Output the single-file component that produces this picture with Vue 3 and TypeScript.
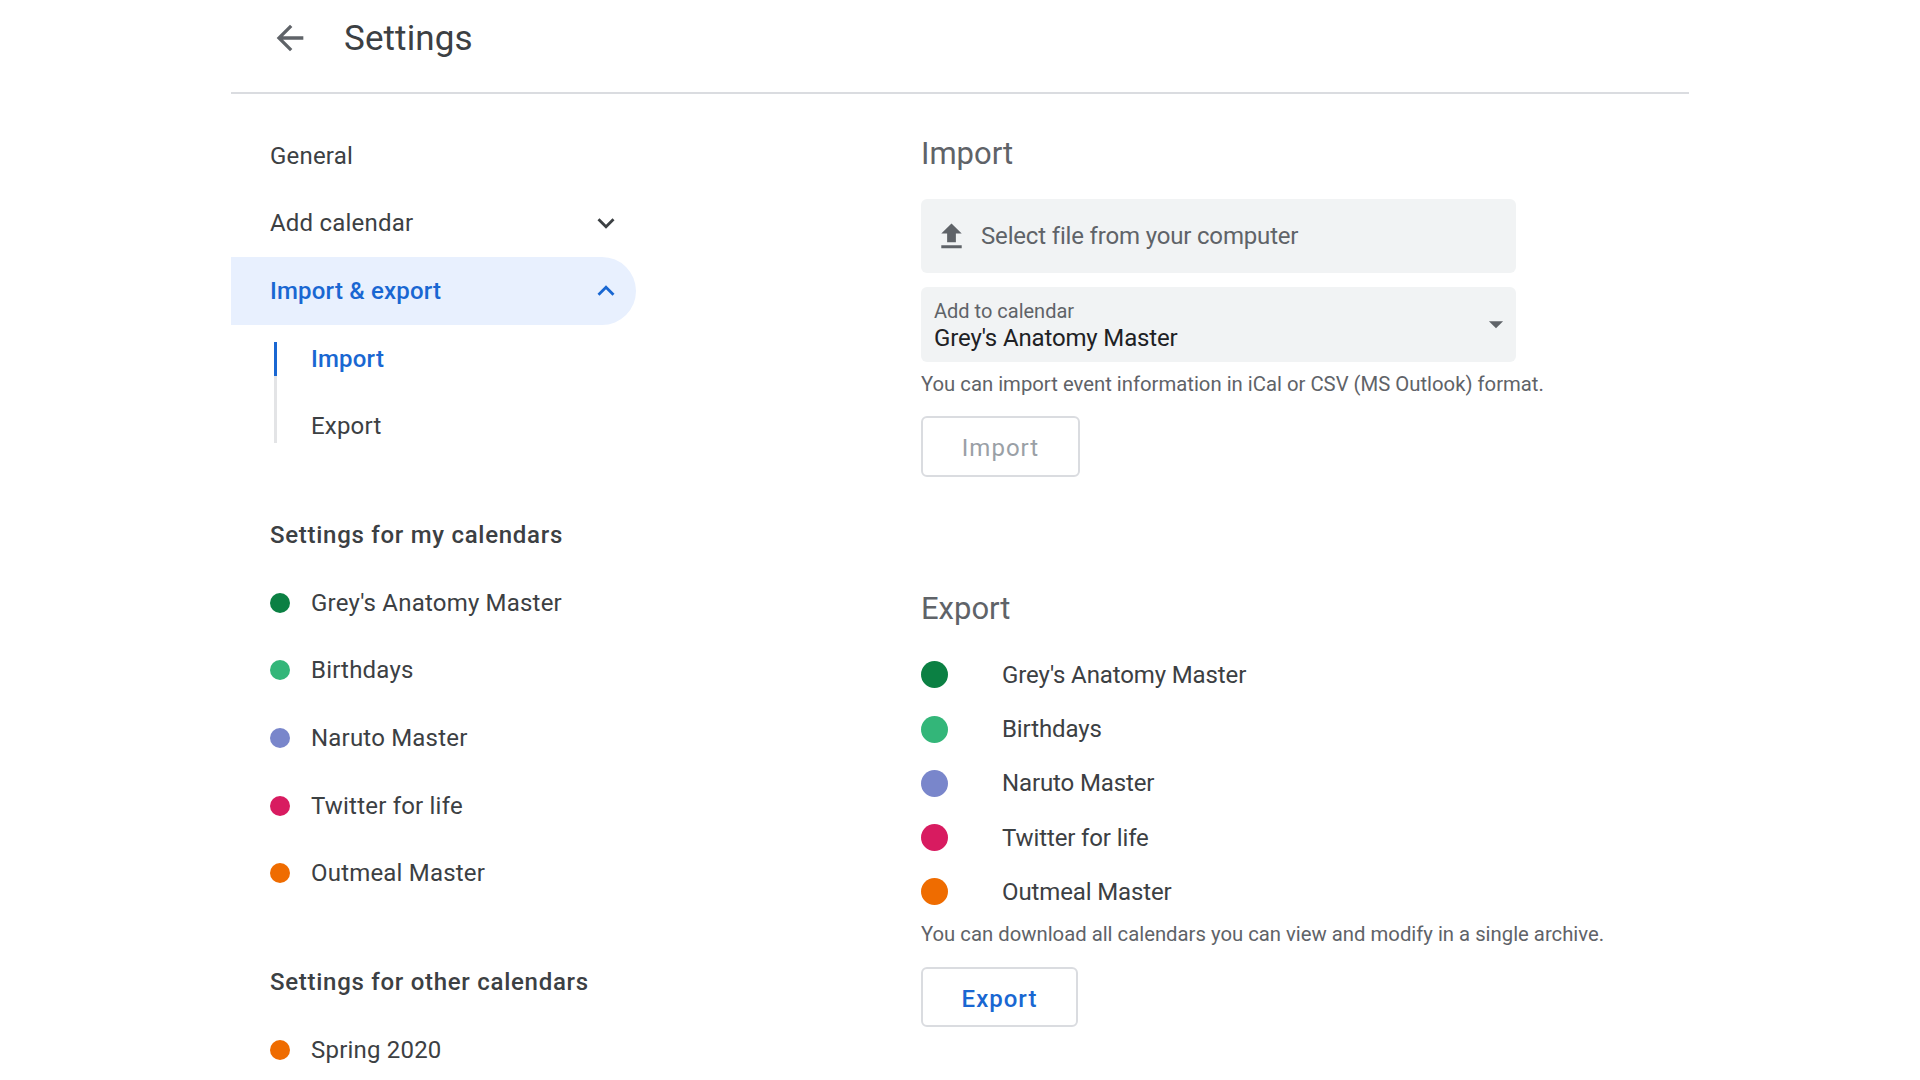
<script setup lang="ts">
interface Cal {
  name: string;
  color: string;
}

const myCalendars: Cal[] = [
  { name: "Grey's Anatomy Master", color: "#0b8043" },
  { name: "Birthdays", color: "#33b679" },
  { name: "Naruto Master", color: "#7986cb" },
  { name: "Twitter for life", color: "#d81b60" },
  { name: "Outmeal Master", color: "#ef6c00" },
];
const otherCalendars: Cal[] = [{ name: "Spring 2020", color: "#ef6c00" }];
</script>

<template>
  <div class="page">
    <header class="topbar">
      <svg class="back" viewBox="0 0 24 24" width="40" height="40">
        <path d="M20 11H7.83l5.59-5.59L12 4l-8 8 8 8 1.41-1.41L7.83 13H20v-2z" />
      </svg>
      <h1>Settings</h1>
    </header>

    <div class="content">
      <nav class="sidebar">
        <div class="row">General</div>
        <div class="row between">
          Add calendar
          <svg class="chev" viewBox="0 0 24 24" width="34" height="34">
            <path d="M16.59 8.59L12 13.17 7.41 8.59 6 10l6 6 6-6z" />
          </svg>
        </div>
        <div class="row between selected">
          Import &amp; export
          <svg class="chev" viewBox="0 0 24 24" width="34" height="34">
            <path d="M7.41 15.41L12 10.83l4.59 4.58L18 14l-6-6-6 6z" />
          </svg>
        </div>
        <div class="sub">
          <div class="sub-item active">Import</div>
          <div class="sub-item">Export</div>
        </div>

        <div class="row group">Settings for my calendars</div>
        <div v-for="c in myCalendars" :key="c.name" class="row cal">
          <span class="dot" :style="{ background: c.color }"></span>
          {{ c.name }}
        </div>

        <div class="row group">Settings for other calendars</div>
        <div v-for="c in otherCalendars" :key="c.name" class="row cal">
          <span class="dot" :style="{ background: c.color }"></span>
          {{ c.name }}
        </div>
      </nav>

      <main class="main">
        <h2>Import</h2>
        <div class="field file">
          <svg class="upload" viewBox="0 0 24 24" width="35" height="35">
            <path d="M9 16h6v-6h4l-7-7-7 7h4zm-4 2h14v2H5z" />
          </svg>
          Select file from your computer
        </div>
        <div class="field picker">
          <div class="picker-text">
            <span class="picker-label">Add to calendar</span>
            <span class="picker-value">Grey's Anatomy Master</span>
          </div>
          <svg class="caret" viewBox="0 0 24 24" width="34" height="34">
            <path d="M7 10l5 5 5-5z" />
          </svg>
        </div>
        <p class="hint">You can import event information in iCal or CSV (MS Outlook) format.</p>
        <button class="btn disabled" type="button">Import</button>

        <h2 class="export-title">Export</h2>
        <div class="export-list">
          <div v-for="c in myCalendars" :key="c.name" class="export-row">
            <span class="big-dot" :style="{ background: c.color }"></span>
            {{ c.name }}
          </div>
        </div>
        <p class="hint export-hint">You can download all calendars you can view and modify in a single archive.</p>
        <button class="btn export-btn" type="button">Export</button>
      </main>
    </div>
  </div>
</template>

<style>
html,
body {
  background: #fff;
  overflow: hidden;
}
</style>

<style scoped>
.page {
  height: 1080px;
  overflow: hidden;
  padding: 0 231px;
  font-family: Roboto, "Liberation Sans", sans-serif;
  color: #3c4043;
}
.topbar {
  height: 76px;
  display: flex;
  align-items: center;
  padding: 0 0 16px 39px;
  border-bottom: 2px solid #dadce0;
}
.back {
  fill: #5f6368;
  flex: none;
}
h1 {
  margin: 0 0 0 34px;
  font-size: 35px;
  font-weight: 400;
  letter-spacing: 0.1px;
  color: #3c4043;
}
.content {
  display: flex;
}
.sidebar {
  width: 690px;
  flex: none;
  padding-top: 28px;
}
.row {
  height: 67.6px;
  width: 405px;
  box-sizing: border-box;
  padding: 0 0 0 39px;
  display: flex;
  align-items: center;
  font-size: 24px;
  letter-spacing: 0.2px;
}
.between {
  justify-content: space-between;
  padding-right: 13px;
}
.chev {
  fill: #3c4043;
}
.selected {
  background: #e8f0fe;
  color: #1967d2;
  font-weight: 500;
  border-radius: 0 34px 34px 0;
}
.selected .chev {
  fill: #1967d2;
}
.sub {
  position: relative;
  margin-left: 43px;
}
.sub::before {
  content: "";
  position: absolute;
  left: 0;
  top: 17px;
  bottom: 17px;
  width: 3px;
  background: #e3e4e6;
}
.sub-item {
  position: relative;
  height: 67.6px;
  padding-left: 37px;
  display: flex;
  align-items: center;
  font-size: 24px;
  letter-spacing: 0.2px;
}
.active {
  color: #1967d2;
  font-weight: 500;
}
.active::before {
  content: "";
  position: absolute;
  left: 0;
  top: 17px;
  height: 34px;
  width: 3px;
  background: #1967d2;
}
.group {
  margin-top: 41.5px;
  font-weight: 500;
  letter-spacing: 0.72px;
  width: 560px;
}
.cal {
  width: 560px;
}
.dot {
  width: 20px;
  height: 20px;
  border-radius: 50%;
  margin-right: 21px;
  flex: none;
}
.main {
  padding-top: 40px;
  flex: 1;
}
h2 {
  margin: 0;
  height: 40px;
  line-height: 40px;
  font-size: 31px;
  font-weight: 400;
  color: #5f6368;
}
.field {
  width: 595px;
  background: #f1f3f4;
  border-radius: 6px;
  display: flex;
  align-items: center;
  box-sizing: border-box;
}
.file {
  height: 74px;
  margin-top: 25px;
  padding-left: 13px;
  font-size: 24px;
  letter-spacing: -0.17px;
  color: #5f6368;
}
.upload {
  fill: #5f6368;
  margin-right: 12px;
}
.picker {
  height: 75px;
  margin-top: 14px;
  padding: 0 3px 0 13px;
  justify-content: space-between;
}
.picker-text {
  display: flex;
  flex-direction: column;
}
.picker-label {
  font-size: 20px;
  line-height: 26px;
  color: #5f6368;
}
.picker-value {
  font-size: 24px;
  line-height: 28px;
  letter-spacing: -0.15px;
  color: #202124;
}
.caret {
  fill: #5f6368;
  margin-bottom: 2px;
}
.hint {
  margin: 7.5px 0 0;
  font-size: 20.3px;
  line-height: 28px;
  color: #5f6368;
}
.btn {
  display: block;
  margin-top: 18.5px;
  padding: 3px 0 0;
  width: 159px;
  height: 61px;
  background: #fff;
  border: 2px solid #dadce0;
  border-radius: 6px;
  font-family: inherit;
  font-size: 24px;
  font-weight: 500;
  letter-spacing: 1px;
  color: #1967d2;
}
.disabled {
  color: #9aa0a6;
  font-weight: 400;
}
.export-title {
  margin-top: 111.6px;
}
.export-list {
  margin-top: 19.3px;
}
.export-row {
  height: 54.2px;
  display: flex;
  align-items: center;
  font-size: 24px;
  letter-spacing: -0.12px;
}
.big-dot {
  width: 27px;
  height: 27px;
  border-radius: 50%;
  margin-right: 54px;
  flex: none;
}
.export-hint {
  margin-top: 1.5px;
}
.export-btn {
  margin-top: 19px;
  width: 157px;
  height: 60px;
}
</style>
